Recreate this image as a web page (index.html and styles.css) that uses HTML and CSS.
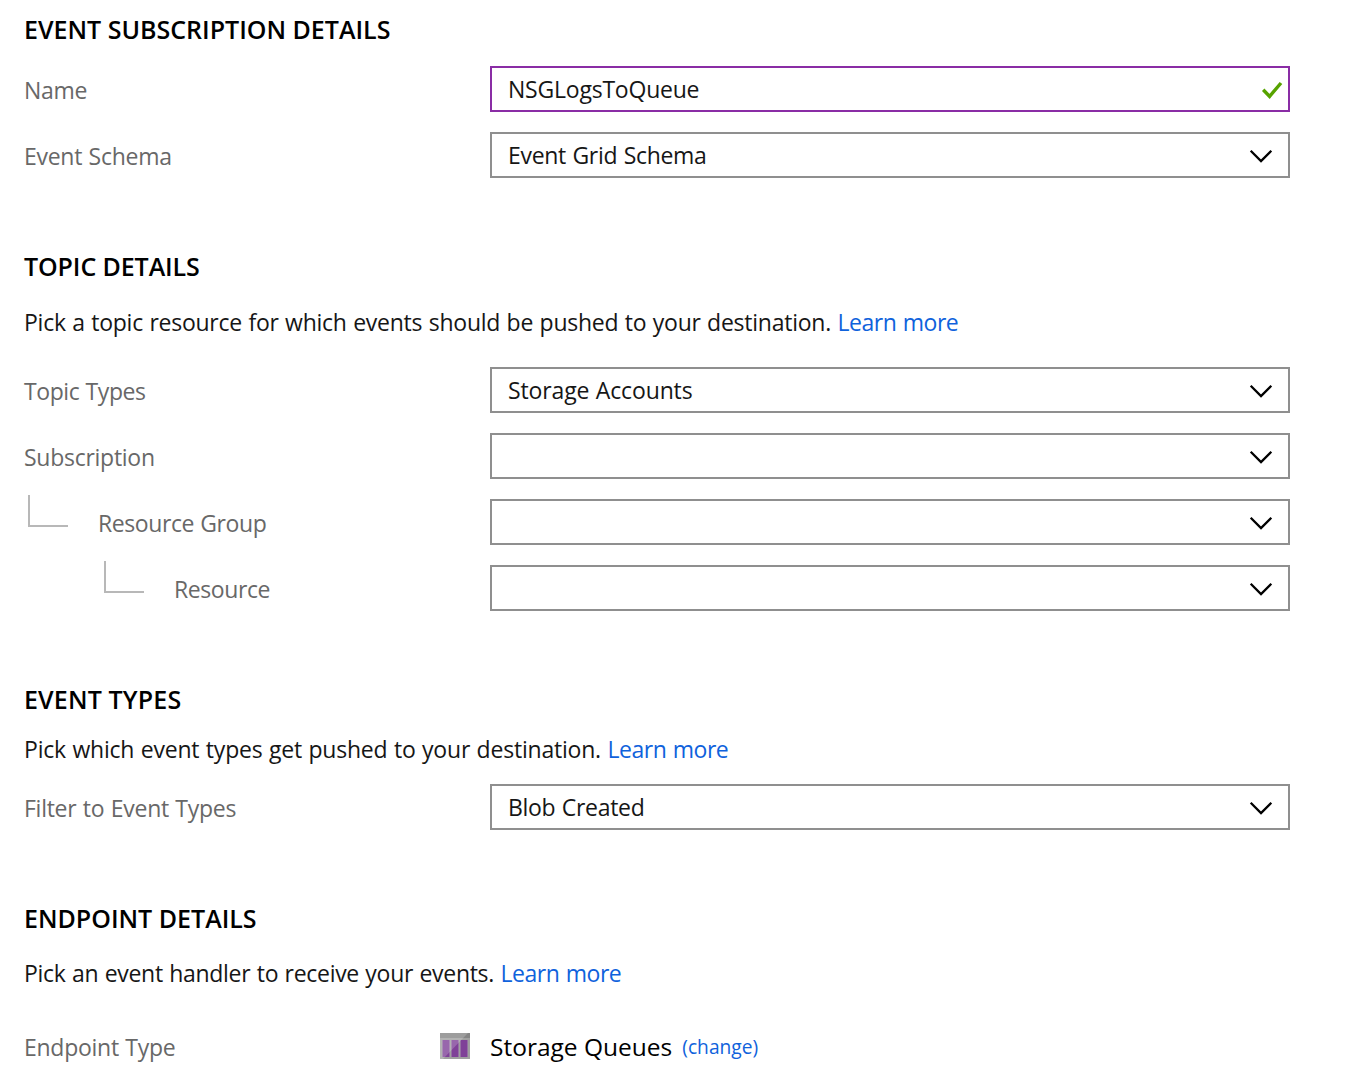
FILE: index.html
```html
<!DOCTYPE html>
<html lang="en">
<head>
<meta charset="utf-8">
<title>Create Event Subscription</title>
<link rel="stylesheet" href="styles.css">
</head>
<body>
<svg class="defs" width="0" height="0">
  <symbol id="chevron" viewBox="0 0 24 14"><path d="M1.7 1.7L12 12L22.3 1.7" fill="none" stroke="#000" stroke-width="2.3"/></symbol>
</svg>
<main class="form">
  <section class="section">
    <h2>EVENT SUBSCRIPTION DETAILS</h2>
    <div class="row"><label>Name</label><div class="field valid"><span>NSGLogsToQueue</span><svg class="check" viewBox="0 0 22 20"><path d="M2.2 9.8L8.6 16.4L20 3" fill="none" stroke="#57a300" stroke-width="3.4"/></svg></div></div>
    <div class="row"><label>Event Schema</label><div class="field"><span>Event Grid Schema</span><svg class="chevron"><use href="#chevron"/></svg></div></div>
  </section>
  <section class="section topic">
    <h2>TOPIC DETAILS</h2>
    <p>Pick a topic resource for which events should be pushed to your destination. <a>Learn more</a></p>
    <div class="row"><label class="tight">Topic Types</label><div class="field"><span class="wide">Storage Accounts</span><svg class="chevron"><use href="#chevron"/></svg></div></div>
    <div class="row"><label>Subscription</label><div class="field"><span></span><svg class="chevron"><use href="#chevron"/></svg></div></div>
    <div class="row nested"><i class="branch"></i><label class="tight">Resource Group</label><div class="field"><span></span><svg class="chevron"><use href="#chevron"/></svg></div></div>
    <div class="row nested deep"><i class="branch"></i><label class="tight">Resource</label><div class="field"><span></span><svg class="chevron"><use href="#chevron"/></svg></div></div>
  </section>
  <section class="section types">
    <h2>EVENT TYPES</h2>
    <p>Pick which event types get pushed to your destination. <a>Learn more</a></p>
    <div class="row"><label>Filter to Event Types</label><div class="field"><span>Blob Created</span><svg class="chevron"><use href="#chevron"/></svg></div></div>
  </section>
  <section class="section endpoint">
    <h2>ENDPOINT DETAILS</h2>
    <p>Pick an event handler to receive your events. <a>Learn more</a></p>
    <div class="row">
      <label>Endpoint Type</label>
      <svg class="queue" viewBox="0 0 30 26">
        <rect width="30" height="26" rx=".5" fill="#a0a0a0"/>
        <rect width="30" height="5" fill="#858585"/>
        <path d="M2 7h8v17H2zM11 7h8v17h-8zM20 7h8v17h-8z" fill="#aaa0ae"/>
        <path d="M2.5 7h7v17h-7zM11.5 7h7v17h-7zM20.5 7h7v17h-7z" fill="#7f4198"/>
        <path d="M0 0H28L3 26H0z" fill="#fff" fill-opacity=".2"/>
      </svg>
      <span class="value">Storage Queues</span><a class="change">(change)</a>
    </div>
  </section>
</main>
</body>
</html>
```
FILE: styles.css
```css
body { margin: 0; background: #fff; color: #161616; font: 400 23px/32px "Open Sans", "Noto Sans", sans-serif; word-spacing: .75px; }
.defs { display: block; }
.form { padding: 13px 74px 0 24px; }
.section + .section { margin-top: 72px; }
h2 { margin: 0 0 21px; color: #000; font-size: 25px; line-height: 32px; font-weight: 600; word-spacing: 0; }
p { margin: 0; letter-spacing: -.25px; }
a { color: #0f62dc; letter-spacing: -.45px; }
.topic h2 { margin-bottom: 24px; letter-spacing: -.1px; }
.topic p { margin-bottom: 29px; }
.types h2 { margin-bottom: 18px; letter-spacing: .15px; }
.types p { margin-bottom: 19px; letter-spacing: -.21px; }
.endpoint h2 { margin-bottom: 23px; }
.endpoint p { margin-bottom: 35px; letter-spacing: -.3px; }
.row { display: flex; height: 46px; align-items: center; }
.row + .row { margin-top: 20px; }
.row label { flex: 1; color: #686868; padding-top: 2px; letter-spacing: -.27px; }
.row .tight { letter-spacing: -.42px; }
.field { box-sizing: border-box; width: 800px; height: 46px; border: 2px solid #8f8f8f; display: flex; align-items: center; justify-content: space-between; padding: 0 15px 0 16px; letter-spacing: -.3px; }
.field .wide { letter-spacing: -.14px; }
.field.valid { border-color: #8a2da5; padding-right: 5px; letter-spacing: -.22px; }
.valid span { margin-top: -1px; }
.chevron { width: 24px; height: 14px; margin-top: 1px; }
.check { width: 22px; height: 20px; margin-top: 1px; }
.branch { align-self: flex-start; box-sizing: border-box; width: 40px; height: 32px; margin: -4px 30px 0 4px; border: solid #b8b8b8; border-width: 0 0 2px 2px; }
.deep .branch { margin-left: 80px; }
.endpoint .row label { flex: 0 0 416px; padding-top: 0; }
.queue { width: 30px; height: 26px; margin: -2px 20px 0 0; }
.value { font-size: 24.5px; color: #000; margin-top: -1px; word-spacing: 0; }
.change { font-size: 19.2px; margin-left: 10px; letter-spacing: 0; }
```
